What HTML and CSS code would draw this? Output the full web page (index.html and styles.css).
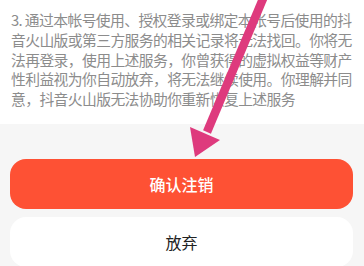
FILE: index.html
```html
<!DOCTYPE html>
<html lang="zh">
<head>
<meta charset="utf-8">
<link rel="stylesheet" href="styles.css">
</head>
<body>
<div class="page">
  <section class="notice">
    <p class="notice-text">3. 通过本帐号使用、授权登录或绑定本帐号后使用的抖<br>音火山版或第三方服务的相关记录将无法找回。你将无<br>法再登录，使用上述服务，你曾获得的虚拟权益等财产<br>性利益视为你自动放弃，将无法继续使用。你理解并同<br>意，抖音火山版无法协助你重新恢复上述服务</p>
  </section>
  <section class="actions">
    <button class="btn btn-primary">确认注销</button>
    <button class="btn btn-secondary">放弃</button>
  </section>
  <svg class="arrow" width="364" height="266" viewBox="0 0 364 266">
    <line x1="265" y1="-6" x2="207" y2="132" stroke="#de3a7d" stroke-width="8.5"/>
    <polygon points="195,157 190,127 220,140" fill="#de3a7d"/>
  </svg>
</div>
</body>
</html>
```
FILE: styles.css
```css
html, body {
  margin: 0;
  padding: 0;
}
body {
  background: #f6f6f6;
  font-family: "Noto Sans CJK SC", "Noto Sans", sans-serif;
  width: 364px;
  height: 266px;
  overflow: hidden;
}
.page {
  position: relative;
  width: 364px;
  height: 266px;
}
.notice {
  background: #ffffff;
  padding: 10px 0 15px 11px;
}
.notice-text {
  margin: 0;
  font-size: 14.8px;
  line-height: 19.8px;
  letter-spacing: -0.6px;
  color: #8c8c8c;
  white-space: nowrap;
}
.actions {
  display: flex;
  flex-direction: column;
  gap: 8px;
  padding: 35px 11px 0 10px;
}
.btn {
  display: flex;
  align-items: center;
  justify-content: center;
  height: 50px;
  border: none;
  border-radius: 16px;
  font-family: "Noto Sans CJK SC", "Noto Sans", sans-serif;
  font-size: 16px;
  padding: 0;
}
.btn-primary {
  background: #fe5134;
  color: #ffffff;
  font-weight: 500;
}
.btn-secondary {
  background: #ffffff;
  color: #222222;
  font-weight: 400;
}
.arrow {
  position: absolute;
  left: 0;
  top: 0;
  pointer-events: none;
}
```
